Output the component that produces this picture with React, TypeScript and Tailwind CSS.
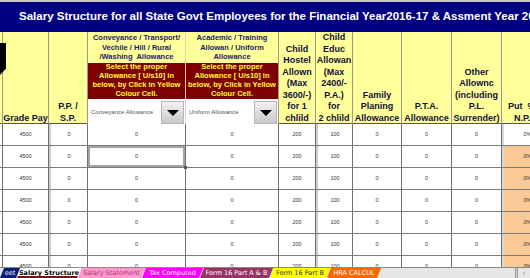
const grid = "grid grid-cols-[3px_46px_39px_98px_93px_37px_37px_49px_50px_50px_50px]";

const hdr = "flex flex-col justify-end items-center text-center border-r border-[#9c9c8c] font-bold text-[9px] leading-[11.5px] text-[#10103a] pb-[1px]";

function Dropdown({ label }: { label: string }) {
  return (
    <div className="h-[26px] bg-white flex items-center relative">
      <span className="pl-[3px] text-[6px] text-[#555] whitespace-nowrap">{label}</span>
      <div className="absolute right-[1px] top-[2px] bottom-[1px] w-[23px] bg-gradient-to-b from-[#f2f2f2] to-[#c9c9c9] border border-[#b5b5b5] flex items-center justify-center">
        <div className="w-0 h-0 border-l-[6px] border-r-[6px] border-t-[6px] border-l-transparent border-r-transparent border-t-black" />
      </div>
    </div>
  );
}

function RedBox() {
  return (
    <div className="h-[36px] bg-[#7f0000] text-[#ffff33] font-bold text-[7.5px] leading-[8.8px] flex flex-col items-center justify-center whitespace-nowrap overflow-hidden">
      <span>Select the proper</span>
      <span>Allowance [ U/s10] in</span>
      <span>below, by Click in Yellow</span>
      <span>Colour Cell.</span>
    </div>
  );
}

const rows = [0, 1, 2, 3, 4, 5, 6];

const cell = "flex items-center justify-center text-[5.5px] text-[#333] border-r border-[#6f6f6f]";

const tabs = [
  { t: "eet", w: "w-[20px]", c: "bg-[#0b1f7a] text-white", first: true },
  { t: "Salary Structure", w: "w-[64px]", c: "bg-white text-black font-bold border-b-2 border-[#7a1010]" },
  { t: "Salary Statement", w: "w-[67px]", c: "bg-[#ff99cc] text-[#b0307a]" },
  { t: "Tax Computed", w: "w-[61px]", c: "bg-[#ff00ff] text-white" },
  { t: "Form 16 Part A & B", w: "w-[73px]", c: "bg-[#993366] text-white" },
  { t: "Form 16 Part B", w: "w-[60px]", c: "bg-[#ffff00] text-[#333]" },
  { t: "HRA CALCUL", w: "w-[54px]", c: "bg-[#ff6600] text-white" },
];

export default function App() {
  return (
    <div className="w-[530px] h-[278px] overflow-hidden flex flex-col bg-white relative font-['Liberation_Sans',Arial,sans-serif]">
      {/* title */}
      <div className="h-[32px] shrink-0 border-t-2 border-[#c8c8c8] bg-[#000080] flex items-center pl-[19px] whitespace-nowrap">
        <span className="text-white font-bold text-[11.5px]">
          Salary Structure for all State Govt Employees for the Financial Year2016-17 &amp; Assment Year 2017-18
        </span>
      </div>

      {/* header */}
      <div className={`${grid} h-[92px] shrink-0 bg-[#ffff99] border-b border-[#555]`}>
        <div className="border-r border-[#9c9c8c]" />
        <div className={hdr}>Grade Pay</div>
        <div className={hdr}>
          <span>P.P. /</span>
          <span>S.P.</span>
        </div>
        <div className="flex flex-col border-r border-[#e8d0d0]">
          <div className="flex-1 pt-[1px] text-[#1a1a6e] font-bold text-[7.5px] leading-[9.5px] text-center whitespace-nowrap">
            <div>Conveyance / Transport/</div>
            <div>Vechile / Hill / Rural</div>
            <div>/Washing&nbsp; Allowance</div>
          </div>
          <RedBox />
          <Dropdown label="Conveyance Allowance" />
        </div>
        <div className="flex flex-col border-r border-[#9c9c8c]">
          <div className="flex-1 pt-[1px] text-[#1a1a6e] font-bold text-[7.5px] leading-[9.5px] text-center whitespace-nowrap">
            <div>Academic / Training</div>
            <div>Allowan / Uniform</div>
            <div>Allowance</div>
          </div>
          <RedBox />
          <Dropdown label="Uniform Allowance" />
        </div>
        <div className={hdr}>
          <span>Child</span>
          <span>Hostel</span>
          <span>Allown</span>
          <span>(Max</span>
          <span>3600/-)</span>
          <span>for 1</span>
          <span>chlild</span>
        </div>
        <div className={hdr}>
          <span>Child</span>
          <span>Educ</span>
          <span>Allowan</span>
          <span>(Max</span>
          <span>2400/-</span>
          <span>P.A.)</span>
          <span>for</span>
          <span>2 chlild</span>
        </div>
        <div className={hdr}>
          <span>Family</span>
          <span>Planing</span>
          <span>Allowance</span>
        </div>
        <div className={hdr}>
          <span>P.T.A.</span>
          <span>Allowance</span>
        </div>
        <div className={hdr}>
          <span>Other</span>
          <span>Allownc</span>
          <span>(including</span>
          <span>P.L.</span>
          <span>Surrender)</span>
        </div>
        <div className={`${hdr} items-start pl-[6px] whitespace-nowrap`}>
          <span>Put&nbsp; %</span>
          <span className="pl-[6px]">N.P.</span>
        </div>
      </div>

      {/* data rows */}
      <div className="flex-1 overflow-hidden">
        {rows.map((r) => (
          <div key={r} className={`${grid} h-[22px] border-b border-[#7a7a7a]`}>
            <div className="border-r border-[#6f6f6f]" />
            <div className={cell}>4500</div>
            <div className={`${cell} border-l-2 border-l-[#cfcfcf]`}>0</div>
            <div className={`${cell} relative`}>
              0
              {r === 1 && (
                <>
                  <div className="absolute inset-0 shadow-[inset_0_0_0_2px_#a3a3a3]" />
                  <div className="absolute right-[-2px] bottom-[-2px] w-[3px] h-[3px] bg-[#555]" />
                </>
              )}
            </div>
            <div className={cell}>0</div>
            <div className={cell}>200</div>
            <div className={`${cell} border-l-2 border-l-[#cfcfcf]`}>100</div>
            <div className={cell}>0</div>
            <div className={cell}>0</div>
            <div className={cell}>0</div>
            <div className={`${cell} border-l-2 border-l-[#d8d8d8] ${r === 0 ? "" : "bg-[#fbc995]"}`}>0%</div>
          </div>
        ))}
      </div>

      {/* sheet tabs */}
      <div className="h-[11px] shrink-0 bg-[#e6e6e6] border-t border-[#8a8a8a] flex items-stretch text-[6.5px] leading-[10px] font-['DejaVu_Sans',Verdana,sans-serif] whitespace-nowrap">
        {tabs.map((tab, i) => (
          <div
            key={tab.t}
            className={`${tab.w} ${tab.c} ${i === 0 ? "" : "-ml-[3px]"} shrink-0 flex justify-center overflow-hidden [clip-path:polygon(4px_0,100%_0,calc(100%-4px)_100%,0_100%)]`}
          >
            {tab.t}
          </div>
        ))}
        <div className="flex-1" />
        <div className="w-[3px] border-l border-r border-[#9a9a9a] bg-[#d0d0d0]" />
        <div className="w-[12px] flex justify-center text-[#555]">‹</div>
      </div>

      {/* black marker at left edge */}
      <div className="absolute left-0 top-[43px] w-[6px] h-[32px] bg-black [clip-path:polygon(0_0,100%_0,100%_80%,0_100%)]" />
    </div>
  );
}
